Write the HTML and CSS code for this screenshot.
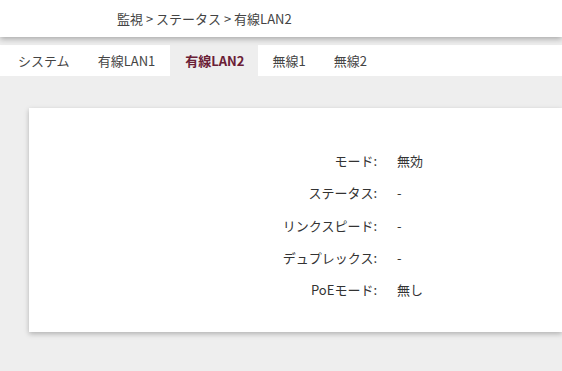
FILE: index.html
```html
<!DOCTYPE html>
<html lang="ja">
<head>
    <meta charset="UTF-8">
    <meta name="viewport" content="width=device-width, initial-scale=1.0">
    <title>監視 - ステータス</title>
    <link rel="stylesheet" href="styles.css">
</head>
<body>
    <header class="header">
        <div class="breadcrumb">監視 &gt; ステータス &gt; 有線LAN2</div>
    </header>

    <nav class="tabs">
        <div class="tab">システム</div>
        <div class="tab">有線LAN1</div>
        <div class="tab active">有線LAN2</div>
        <div class="tab">無線1</div>
        <div class="tab">無線2</div>
    </nav>

    <main class="content">
        <div class="card">
            <div class="status-grid">
                <div class="label">モード:</div>
                <div class="value">無効</div>
                <div class="label">ステータス:</div>
                <div class="value">-</div>
                <div class="label">リンクスピード:</div>
                <div class="value">-</div>
                <div class="label">デュプレックス:</div>
                <div class="value">-</div>
                <div class="label">PoEモード:</div>
                <div class="value">無し</div>
            </div>
        </div>
    </main>
</body>
</html>
```

FILE: styles.css
```css
body {
    font-family: "Noto Sans CJK JP", "Noto Sans", sans-serif;
    font-size: 13px;
    margin: 0;
    color: #333;
    background-color: #eeeeee;
    height: 100vh;
    overflow: hidden;
}
.header {
    background-color: #fff;
    height: 37px;
    box-shadow: 0 2px 6px rgba(0, 0, 0, 0.3);
    position: relative;
    z-index: 2;
    display: flex;
    align-items: center;
}
.breadcrumb {
    padding-left: 117px;
    color: #444;
}
.tabs {
    margin-top: 8px;
    background-color: #fff;
    height: 31px;
    display: flex;
    padding-left: 4px;
}
.tab {
    padding: 0 14px;
    display: flex;
    align-items: center;
    color: #444;
}
.tab.active {
    padding: 0 14px 0 15px;
    margin-left: 1px;
    background-color: #eeeeee;
    color: #6a2036;
    font-weight: bold;
}
.content {
    padding: 32px 0 0 29px;
}
.card {
    background-color: #fff;
    height: 224px;
    box-shadow: 0 2px 5px rgba(0, 0, 0, 0.25);
    padding-top: 37px;
    box-sizing: border-box;
}
.status-grid {
    display: grid;
    grid-template-columns: 348px 1fr;
    column-gap: 20px;
    grid-auto-rows: 32.3px;
}
.label {
    text-align: right;
    line-height: 32px;
}
.value {
    line-height: 32px;
}
```
